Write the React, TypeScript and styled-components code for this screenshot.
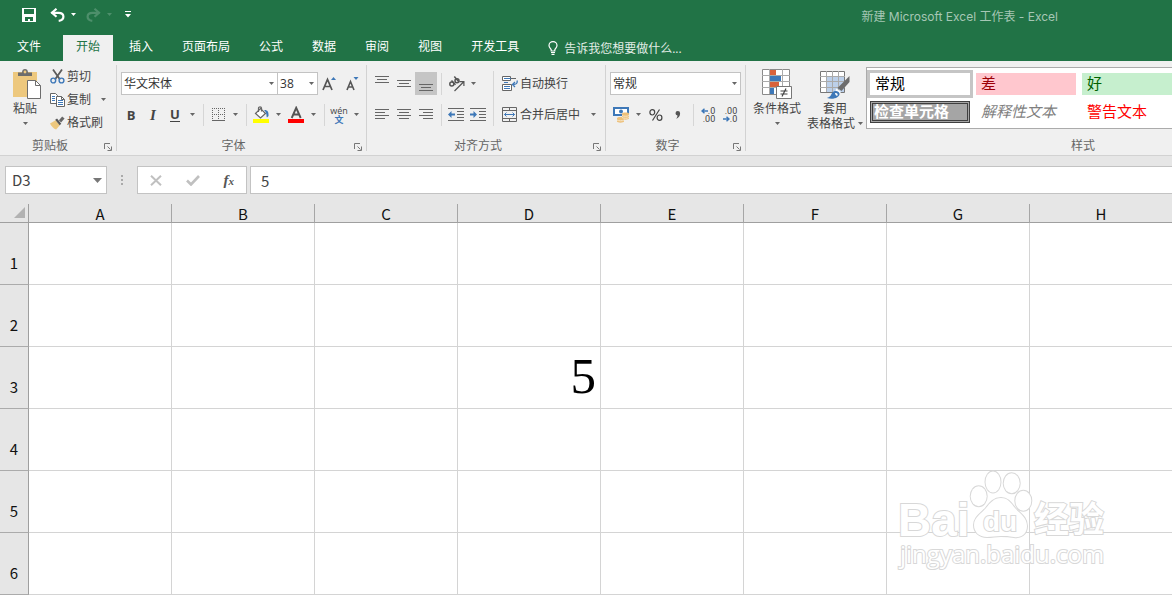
import React from 'react';
import styled, { createGlobalStyle, css } from 'styled-components';

const GlobalStyle = createGlobalStyle`
  *, *::before, *::after { box-sizing: border-box; }
  html, body { margin: 0; padding: 0; }
  body {
    background: #fff;
    color: #444;
    font-family: "Open Sans", "Noto Sans CJK SC", sans-serif;
    font-size: 12px;
    line-height: 16px;
    overflow: hidden;
  }
  button, input, select { font: inherit; color: inherit; margin: 0; }
  button { background: none; border: 0; padding: 0; cursor: pointer; }
  svg { display: block; flex: none; }
`;

const App = styled.div`
  display: flex;
  flex-direction: column;
  min-height: 100vh;
`;

/* ---------- Title bar and tabs ---------- */

const TitleBar = styled.header`
  display: flex;
  align-items: center;
  justify-content: space-between;
  height: 35px;
  padding: 0 114px 6px 22px;
  background: #217346;
  color: #a6c7b5;
`;

const QuickAccess = styled.div`
  display: flex;
  align-items: center;
  color: #fff;
`;

const QuickButton = styled.button<{ $gap?: number }>`
  display: flex;
  align-items: center;
  gap: 6px;
  margin-right: ${(p) => p.$gap ?? 0}px;
  &:disabled { color: #4d8f6b; }
`;

const Title = styled.h1`
  margin: 0;
  padding-top: 4px;
  font-family: Inter, "Noto Sans CJK SC", sans-serif;
  font-size: 12px;
  font-weight: 400;
`;

const TabBar = styled.nav`
  display: flex;
  gap: 3px;
  height: 26px;
  background: #217346;
  color: #fff;
`;

const Tab = styled.button<{ $active?: boolean; $file?: boolean }>`
  flex: none;
  padding: ${(p) => (p.$file ? '0 19px 2px 17px' : '0 13px 2px')};
  ${(p) =>
    p.$active &&
    css`
      background: #f0f0f0;
      color: #217346;
    `}
`;

const TellMe = styled.label`
  display: flex;
  align-items: center;
  gap: 6px;
  flex: 1;
  margin-left: 13px;
`;

const TellMeInput = styled.input`
  flex: 1;
  min-width: 0;
  height: 18px;
  padding: 0;
  border: 0;
  background: none;
  outline: 0;
  &::placeholder { color: #e1ede6; opacity: 1; }
`;

/* ---------- Ribbon ---------- */

const Ribbon = styled.section`
  display: flex;
  height: 95px;
  padding: 4px 0;
  background: #f0f0f0;
  border-bottom: 1px solid #d2d2d2;
`;

const Group = styled.div<{ $grow?: boolean }>`
  display: flex;
  flex-direction: column;
  flex: ${(p) => (p.$grow ? '1 1 0' : 'none')};
  min-width: 0;
  border-right: ${(p) => (p.$grow ? '0' : '1px solid #d2d2d2')};
`;

const GroupBody = styled.div<{ $left?: number; $right?: number }>`
  display: flex;
  flex: 1;
  min-height: 0;
  padding: 0 ${(p) => p.$right ?? 4}px 0 ${(p) => p.$left ?? 4}px;
`;

const GroupFooter = styled.div<{ $end?: boolean }>`
  display: flex;
  justify-content: ${(p) => (p.$end ? 'flex-end' : 'normal')};
  height: 14px;
  padding-right: ${(p) => (p.$end ? '77px' : '4px')};
  color: #666;
  line-height: 18px;
`;

const GroupName = styled.span`
  flex: 1;
  padding-right: 4px;
  text-align: center;
`;

const LauncherButton = styled.button`
  align-self: flex-end;
`;

const Rows = styled.div`
  display: flex;
  flex-direction: column;
  gap: 8px;
  padding-top: 7px;
`;

const Row = styled.div<{ $inset?: number }>`
  display: flex;
  align-items: center;
  height: 23px;
  padding-left: ${(p) => p.$inset ?? 0}px;
`;

const Tool = styled.button<{ $pressed?: boolean }>`
  display: flex;
  align-items: center;
  justify-content: center;
  width: 22px;
  height: 23px;
  background: ${(p) => (p.$pressed ? '#c5c5c5' : 'none')};
`;

const Letter = styled.span<{ $kind: 'bold' | 'italic' | 'underline' }>`
  font-weight: 700;
  font-size: 13px;
  line-height: 14px;
  ${(p) => p.$kind === 'italic' && 'font-family: "Liberation Serif", serif; font-style: italic; font-size: 15px;'}
  ${(p) => p.$kind === 'underline' && 'line-height: 13px; border-bottom: 1px solid #444;'}
`;

const CaretButton = styled.button<{ $gap?: number }>`
  display: flex;
  align-items: center;
  justify-content: center;
  width: 13px;
  height: 23px;
  margin-left: ${(p) => p.$gap ?? 0}px;
`;

const Divider = styled.span<{ $tall?: boolean }>`
  flex: none;
  width: 1px;
  height: ${(p) => (p.$tall ? 55 : 22)}px;
  margin: ${(p) => (p.$tall ? '6px 4px 0 4px' : '0 3px 0 4px')};
  background: #d6d6d6;
`;

const TextTool = styled.button`
  display: flex;
  align-items: center;
  gap: 2px;
  height: 23px;
  padding-left: 4px;
  white-space: nowrap;
`;

const ClipList = styled.div`
  display: flex;
  flex-direction: column;
  padding-left: 5px;
`;

const ClipRow = styled.div`
  display: flex;
  align-items: center;
  height: 23px;
`;

const BigButton = styled.button<{ $width: number }>`
  display: flex;
  flex-direction: column;
  align-items: center;
  flex: none;
  width: ${(p) => p.$width}px;
  padding-top: 4px;
  line-height: 15px;
  white-space: nowrap;
`;

const BigLabel = styled.span`
  display: flex;
  align-items: center;
  gap: 3px;
  min-height: 15px;
  &:first-of-type { margin-top: 2px; }
`;

const SelectBox = styled.span<{ $width: number }>`
  position: relative;
  display: block;
  width: ${(p) => p.$width}px;
  height: 23px;
  & + & { margin-left: -1px; }
  svg { position: absolute; right: 4px; top: 10px; pointer-events: none; }
`;

const Select = styled.select`
  appearance: none;
  width: 100%;
  height: 100%;
  padding: 0 16px 0 2px;
  border: 1px solid #c3c3c3;
  border-radius: 0;
  background: #fff;
  color: #333;
  outline: 0;
`;

const Gallery = styled.div`
  display: grid;
  grid-template-columns: repeat(3, 100px);
  grid-auto-rows: 22px;
  gap: 6px;
  flex: 1;
  min-width: 0;
  height: 62px;
  margin-top: 2px;
  padding: 5px 3px;
  border: 1px solid #ababab;
  border-right: 0;
  background: #fff;
  overflow: hidden;
`;

type StyleKind = 'normal' | 'bad' | 'good' | 'check' | 'note' | 'warn';

const styleLooks = {
  normal: css`background: #fff; color: #000; box-shadow: 0 0 0 3px #c5c5c5;`,
  bad: css`background: #ffc7ce; color: #9c0006;`,
  good: css`background: #c6efce; color: #006100;`,
  check: css`background: #a5a5a5; color: #fff; font-weight: 700; border: 3px double #3f3f3f; padding-left: 1px;`,
  note: css`color: #7f7f7f; font-style: italic;`,
  warn: css`color: #ff0000;`,
};

const StyleCell = styled.button<{ $kind: StyleKind }>`
  display: flex;
  align-items: center;
  padding: 0 0 2px 5px;
  font-size: 15px;
  line-height: 16px;
  white-space: nowrap;
  ${(p) => styleLooks[p.$kind]}
`;

/* ---------- Formula bar ---------- */

const FormulaBar = styled.div`
  display: flex;
  align-items: center;
  height: 48px;
  padding-left: 5px;
  background: #e6e6e6;
`;

const NameBox = styled.div`
  display: flex;
  align-items: center;
  width: 102px;
  height: 28px;
  padding-right: 4px;
  border: 1px solid #c3c3c3;
  background: #fff;
`;

const NameInput = styled.input`
  flex: 1;
  min-width: 0;
  padding: 0 0 0 6px;
  border: 0;
  background: none;
  outline: 0;
  font-family: "Noto Sans CJK SC", sans-serif;
  font-size: 15px;
`;

const Grip = styled.span`
  width: 30px;
  display: flex;
  justify-content: center;
`;

const FormulaActions = styled.div`
  display: flex;
  align-items: center;
  justify-content: space-around;
  width: 110px;
  height: 28px;
  margin-right: 3px;
  border: 1px solid #c3c3c3;
  background: #fff;
`;

const FormulaInput = styled.input`
  flex: 1;
  min-width: 0;
  height: 28px;
  padding: 0 10px;
  border: 1px solid #c3c3c3;
  border-right: 0;
  background: #fff;
  outline: 0;
  font-family: "Noto Sans CJK SC", sans-serif;
  font-size: 15px;
`;

const Fx = styled.span`
  font-family: "Liberation Serif", serif;
  font-size: 15px;
  font-style: italic;
  font-weight: 700;
  color: #555;
  small { font-size: 11px; }
`;

/* ---------- Sheet ---------- */

const Sheet = styled.main`
  position: relative;
  flex: 1;
`;

const Grid = styled.table`
  width: 100%;
  table-layout: fixed;
  border-collapse: separate;
  border-spacing: 0;
`;

const CornerCell = styled.th`
  width: 29px;
  height: 19px;
  padding: 0 3px 2px 0;
  background: #e6e6e6;
  border-right: 1px solid #9f9f9f;
  border-bottom: 1px solid #9f9f9f;
  svg { margin-left: auto; }
`;

const ColumnHead = styled.th`
  width: 143px;
  height: 19px;
  padding: 2px 0 0;
  background: #e6e6e6;
  border-right: 1px solid #a6a6a6;
  border-bottom: 1px solid #9f9f9f;
  color: #111;
  font: 400 15px/16px "Noto Sans CJK SC", sans-serif;
  &:last-child { width: auto; border-right: 0; }
`;

const RowHead = styled.th`
  height: 62px;
  padding: 18px 0 0;
  background: #e6e6e6;
  border-right: 1px solid #9f9f9f;
  border-bottom: 1px solid #ababab;
  color: #111;
  font: 400 15px/16px "Noto Sans CJK SC", sans-serif;
`;

const Cell = styled.td`
  height: 62px;
  padding: 0 4px 4px 0;
  border-right: 1px solid #d4d4d4;
  border-bottom: 1px solid #d4d4d4;
  color: #000;
  font: 51px/52px "Liberation Serif", serif;
  text-align: right;
  &:last-child { border-right: 0; }
`;

const Watermark = styled.svg`
  position: absolute;
  top: 264px;
  right: 58px;
  pointer-events: none;
`;

/* ---------- Icons ---------- */

const Caret = ({ color = '#666', w = 5 }: { color?: string; w?: number }) => (
  <svg width={w} height={w === 5 ? 3 : 5} viewBox="0 0 5 3" preserveAspectRatio="none">
    <path d="M0 0h5L2.500 3z" fill={color} />
  </svg>
);

const SaveIcon = () => (
  <svg width="14" height="14" viewBox="0 0 14 14" fill="#fff">
    <path fillRule="evenodd" d="M0 0h14v14H0zM2 1v5h10V1zM3 9v4h3v-2h2v2h3V9z" />
  </svg>
);

const UndoIcon = ({ flip = false }: { flip?: boolean }) => (
  <svg width="15" height="14" viewBox="0 0 15 14">
    <g transform={flip ? 'matrix(-1 0 0 1 15 0)' : undefined} fill="none" stroke="currentColor" strokeWidth="2.200">
      <path d="M1.500 4.800h7c3.200 0 4.900 1.600 4.900 3.900 0 2.400-1.800 3.700-4.700 4.100" />
      <path d="M6.500.8 2 4.800l4.500 4" />
    </g>
  </svg>
);

const CustomizeIcon = () => (
  <svg width="6" height="7" viewBox="0 0 6 7" fill="#fff">
    <path d="M0 0h6v1H0zM0 3h6L3 6.500z" />
  </svg>
);

const BulbIcon = () => (
  <svg width="10" height="14" viewBox="0 0 10 14" fill="none" stroke="#fff" strokeWidth="1.200">
    <path d="M3.200 10V8.800C2.600 7.400 1 6.600 1 4.500 1 2.300 2.800.7 5 .7s4 1.600 4 3.800c0 2.100-1.600 2.900-2.200 4.300V10zM3 11.500h4M3.500 13.300h3" />
  </svg>
);

const LauncherIcon = () => (
  <svg width="8" height="8" viewBox="0 0 8 8" fill="none" stroke="#777">
    <path d="M.5 6V.5H6M3.500 3.500l3 3M7.500 3.500v4h-4" />
  </svg>
);

const PasteIcon = () => (
  <svg width="32" height="30" viewBox="-4 0 32 30">
    <path d="M0 3h24v25H0z" fill="#edc87e" />
    <path d="M5 7V3.500h4C9 1 10.300 0 12 0s3 1 3 3.500h4V7z" fill="#6d6d6d" />
    <circle cx="12" cy="3" r="1.400" fill="#edc87e" />
    <path d="M14.500 11.500h8l5 5v13h-13z" fill="#fff" stroke="#6d6d6d" />
    <path d="M22.500 11.500v5h5" fill="none" stroke="#6d6d6d" />
  </svg>
);

const CutIcon = () => (
  <svg width="15" height="15" viewBox="0 0 15 15" fill="none">
    <path d="M3 .5 10 10.500M12 .5 5 10.500" stroke="#5c5c5c" strokeWidth="1.800" />
    <circle cx="3.300" cy="11.500" r="2.400" stroke="#3e78b8" strokeWidth="1.400" />
    <circle cx="11.500" cy="11.500" r="2.400" stroke="#3e78b8" strokeWidth="1.400" />
  </svg>
);

const CopyIcon = () => (
  <svg width="15" height="14" viewBox="0 0 15 14">
    <path d="M.5.5h5l2 2v8h-7z" fill="#fff" stroke="#666" />
    <path d="M2 3.500h3M2 5.500h3M2 7.500h3" stroke="#3e78b8" />
    <path d="M6.500 3.500h5l3 3v7h-8z" fill="#fff" stroke="#666" />
    <path d="M11.500 3.500v3h3" fill="none" stroke="#666" />
    <path d="M8 7.500h5M8 9.500h5M8 11.500h5" stroke="#3e78b8" />
  </svg>
);

const PainterIcon = () => (
  <svg width="15" height="14" viewBox="0 0 16 14">
    <path d="M0 7.500 6 4l4.500 5.500L6.500 14C4 13 1.500 10.500 0 7.500z" fill="#edc87e" />
    <path d="m5.500 3.500 2-1.200 4.500 5.500-1.700 1.600z" fill="#555" />
    <path d="M9.500 4 13 0l2.500 2.200-3.700 4.300z" fill="#666" />
  </svg>
);

const GrowIcon = ({ shrink = false }: { shrink?: boolean }) => (
  <svg width="15" height="16" viewBox="0 0 15 16">
    {shrink ? (
      <>
        <path d="M3 14 6.500 5.500 10 14M4.200 11h4.600" fill="none" stroke="#555" strokeWidth="1.600" />
        <path d="M9.500 1h5L12 4z" fill="#3e78b8" />
      </>
    ) : (
      <>
        <path d="M1 14 5.500 3.500 10 14M2.800 10.500h5.400" fill="none" stroke="#555" strokeWidth="1.700" />
        <path d="M9 4h5l-2.500-3z" fill="#3e78b8" />
      </>
    )}
  </svg>
);

const BordersIcon = () => (
  <svg width="13" height="13" viewBox="0 0 13 13" stroke="#666" shapeRendering="crispEdges">
    <path d="M0 .5h13M0 6.500h13M.5 0v12M6.500 0v12M12.500 0v12" strokeDasharray="1 1" />
    <path d="M0 12.500h13" />
  </svg>
);

const FillIcon = () => (
  <svg width="16" height="17" viewBox="0 0 16 17">
    <path d="m2.500 7.500 5-5 5 5-5 4.500z" fill="#fff" stroke="#666" strokeWidth="1.200" />
    <path d="M5.500 6V2C5.500.6 8.500.6 8.500 2v3.500" fill="none" stroke="#666" strokeWidth="1.200" />
    <path d="M11 4c3-.5 5 1.500 4.500 6l-1.500 1.500c-1-1.500.5-4-3-7.500z" fill="#3e78b8" />
    <path d="M0 13h16v4H0z" fill="#ff0" />
  </svg>
);

const FontColorIcon = () => (
  <svg width="16" height="17" viewBox="0 0 16 17">
    <path d="M3.700 12 8.200 1.800 12.700 12M5.500 8.500h5.400" fill="none" stroke="#555" strokeWidth="1.900" />
    <path d="M0 13h16v4H0z" fill="#f00" />
  </svg>
);

const Phonetic = styled.span`
  display: flex;
  flex-direction: column;
  align-items: center;
  font-size: 9px;
  line-height: 9px;
  b { color: #3e78b8; font-weight: 700; }
`;

const LinesIcon = ({ lines, y = 0 }: { lines: [number, number][]; y?: number }) => (
  <svg width="14" height="17" viewBox="0 0 14 17" stroke="#666">
    {lines.map(([x, w], i) => (
      <path key={i} d={`M${x} ${y + i * 3 + 0.5}h${w}`} />
    ))}
  </svg>
);

const OrientIcon = () => (
  <svg width="17" height="16" viewBox="0 0 17 16" fill="none" stroke="#555" strokeWidth="1.500">
    <circle cx="3.800" cy="8" r="2" />
    <path d="m3.500 4.500 4 4.200M6.300.5l4.300 5" />
    <circle cx="9" cy="4.800" r="2" />
    <path d="m6.500 15 9-9M11.500 5.600h4.400V10" strokeWidth="1.200" />
  </svg>
);

const IndentIcon = ({ right = false }: { right?: boolean }) => (
  <svg width="16" height="13" viewBox="0 0 16 13">
    <path d="M0 .5h16M9 3.500h7M9 6.500h7M9 9.500h7M0 12.500h16" stroke="#666" />
    <path d={right ? 'M0 5.500h3.500V3L7 6.500 3.500 10V7.500H0z' : 'M7 5.500H3.500V3L0 6.500 3.500 10V7.500H7z'} fill="#3e78b8" />
  </svg>
);

const WrapIcon = () => (
  <svg width="16" height="15" viewBox="0 0 16 15" fill="none">
    <path d="M.5.500h8v4h-8zM.5 8.500h9v6h-9z" stroke="#666" fill="#fff" />
    <path d="M9 2.500h5" stroke="#666" />
    <path d="M2 2.500h7M2 6.500h4M2 10.500h6M2 12.500h6" stroke="#3e78b8" />
    <path d="M15 4.500c.8 3-1 4-4 4M13 6l-2.500 2.500L13 11" stroke="#3e78b8" strokeWidth="1.300" />
  </svg>
);

const MergeIcon = () => (
  <svg width="16" height="15" viewBox="0 0 16 15" fill="none">
    <path d="M.5.500h14v14H.5zM.5 3.500h14M.5 11.500h14M7.500.5v3M7.500 11.500v3" stroke="#666" />
    <path d="M2.500 7.500h10M4.500 5.500l-2 2 2 2M10.500 5.500l2 2-2 2" stroke="#3e78b8" />
  </svg>
);

const CurrencyIcon = () => (
  <svg width="17" height="17" viewBox="0 0 17 17">
    <path d="M0 1h16v9H0z" fill="#3e78b8" />
    <path d="M2 3h12v5H2z" fill="#fff" />
    <circle cx="8" cy="5.500" r="2" fill="#3e78b8" />
    <path
      d="M9 7.500C9 6 16 6 16 7.500v5C16 14 9 14 9 12.500zM4 12c0-1.500 7-1.500 7 0v3.500c0 1.500-7 1.500-7 0z"
      fill="#edc07a"
    />
    <path d="M9 9.500c1 1 6 1 7 0M9 11.500c1 1 6 1 7 0M4 14c1 1 6 1 7 0" stroke="#f7e6c8" fill="none" />
  </svg>
);

const CommaIcon = () => (
  <svg width="6" height="8" viewBox="0 0 6 8">
    <path d="M.500 2.300a2.300 2.300 0 1 1 4.600 0C5.200 5 3.500 7.200 1 7.800c1-1 1.500-2 1.500-3.200A2.300 2.300 0 0 1 .5 2.300z" fill="#555" />
  </svg>
);

const PercentIcon = () => (
  <svg width="14" height="12" viewBox="0 0 14 12" fill="none" stroke="#444" strokeWidth="1.200">
    <ellipse cx="3.300" cy="3.300" rx="2.400" ry="2.700" />
    <ellipse cx="10.500" cy="8.700" rx="2.400" ry="2.700" />
    <path d="M10.500.500 3.500 11.500" />
  </svg>
);

const Decimals = styled.span`
  display: grid;
  grid-template-columns: 7px auto;
  align-items: center;
  justify-items: end;
  font: 9px/8px Roboto, sans-serif;
`;

const FullLine = styled.span`
  grid-column: 1 / -1;
`;

const ArrowIcon = ({ right = false }: { right?: boolean }) => (
  <svg width="7" height="6" viewBox="0 0 7 6" fill="none" stroke="#3e78b8" strokeWidth="1.500">
    <path d={right ? 'M0 3h5.500M3.500.800 6 3 3.500 5.200' : 'M7 3H1.500M3.500.800 1 3l2.500 2.200'} />
  </svg>
);

const ConditionalIcon = () => (
  <svg width="30" height="30" viewBox="0 0 30 30">
    <path d="M.5.500h27v25H.5z" fill="#fff" stroke="#8a8a8a" />
    <path d="M0 6.500h28M0 12.500h28M0 18.500h28M7.500 0v25M20.500 0v25" stroke="#aaa" />
    <path d="M8 1h6v5H8zM8 13h9v5H8z" fill="#d9623b" />
    <path d="M8 7h11v5H8zM8 19h4v6H8z" fill="#3e78b8" />
    <path d="M14.500 17.500h15v12h-15z" fill="#fff" stroke="#777" />
    <path d="M18.500 22h7M18.500 25h7M24 19.500l-4 8" stroke="#444" strokeWidth="1.200" fill="none" />
  </svg>
);

const TableFormatIcon = () => (
  <svg width="30" height="30" viewBox="0 0 30 30">
    <path d="M.5 2.500h24v21H.5z" fill="#fff" stroke="#777" />
    <path d="M7 8h17v15H7z" fill="#bcd0ea" />
    <path d="M0 7.500h25M0 12.500h25M0 18.500h25M6.500 2v21M12.500 2v21M18.500 2v21" stroke="#aaa" />
    <path d="M29.500 7v6l-8 9-4-3z" fill="#6d6d6d" />
    <path d="m16.500 19.500 4.500 3.500-1.500 1.700-4-3.200z" fill="#fff" />
    <path d="M7 29c3-1 3.500-2 5-5 2-3 7-2.500 7.500.500C20 28 14 31 7 29z" fill="#3e78b8" />
    <path d="M15 24c2-.500 3 1 2.500 2.500-1 .500-2 0-2.500-2.500z" fill="#fff" />
  </svg>
);

const Launcher = ({ label }: { label: string }) => (
  <LauncherButton aria-label={label}>
    <LauncherIcon />
  </LauncherButton>
);

/* ---------- Data ---------- */

const tabs = ['插入', '页面布局', '公式', '数据', '审阅', '视图', '开发工具'];

const cellStyles: { name: string; kind: StyleKind }[] = [
  { name: '常规', kind: 'normal' },
  { name: '差', kind: 'bad' },
  { name: '好', kind: 'good' },
  { name: '检查单元格', kind: 'check' },
  { name: '解释性文本', kind: 'note' },
  { name: '警告文本', kind: 'warn' },
];

const columns = ['A', 'B', 'C', 'D', 'E', 'F', 'G', 'H'];
const rows = [1, 2, 3, 4, 5, 6];
const values: Record<string, string> = { D3: '5' };

const Combo = ({ label, value, width }: { label: string; value: string; width: number }) => (
  <SelectBox $width={width}>
    <Select aria-label={label} defaultValue={value}>
      <option>{value}</option>
    </Select>
    <Caret />
  </SelectBox>
);

const More = ({ label, gap }: { label: string; gap?: number }) => (
  <CaretButton aria-label={label} $gap={gap}>
    <Caret />
  </CaretButton>
);

export default function ExcelWindow() {
  return (
    <App>
      <GlobalStyle />
      <TitleBar>
        <QuickAccess>
          <QuickButton aria-label="保存" $gap={14}>
            <SaveIcon />
          </QuickButton>
          <QuickButton aria-label="撤消" $gap={10}>
            <UndoIcon />
            <Caret color="#fff" />
          </QuickButton>
          <QuickButton aria-label="恢复" disabled $gap={13}>
            <UndoIcon flip />
            <Caret color="#4d8f6b" />
          </QuickButton>
          <QuickButton aria-label="自定义快速访问工具栏">
            <CustomizeIcon />
          </QuickButton>
        </QuickAccess>
        <Title>新建 Microsoft Excel 工作表 - Excel</Title>
      </TitleBar>

      <TabBar>
        <Tab $file>文件</Tab>
        <Tab $active>开始</Tab>
        {tabs.map((t) => (
          <Tab key={t}>{t}</Tab>
        ))}
        <TellMe>
          <BulbIcon />
          <TellMeInput aria-label="告诉我" placeholder="告诉我您想要做什么..." />
        </TellMe>
      </TabBar>

      <Ribbon>
        <Group>
          <GroupBody $left={9} $right={6}>
            <BigButton $width={32}>
              <PasteIcon />
              <BigLabel>粘贴</BigLabel>
              <BigLabel>
                <Caret />
              </BigLabel>
            </BigButton>
            <ClipList>
              <ClipRow>
                <TextTool>
                  <CutIcon />
                  剪切
                </TextTool>
              </ClipRow>
              <ClipRow>
                <TextTool>
                  <CopyIcon />
                  复制
                </TextTool>
                <More label="复制选项" gap={6} />
              </ClipRow>
              <ClipRow>
                <TextTool>
                  <PainterIcon />
                  格式刷
                </TextTool>
              </ClipRow>
            </ClipList>
          </GroupBody>
          <GroupFooter>
            <GroupName>剪贴板</GroupName>
            <Launcher label="剪贴板设置" />
          </GroupFooter>
        </Group>

        <Group>
          <GroupBody $left={3} $right={3}>
            <Rows>
              <Row $inset={1}>
                <Combo label="字体" value="华文宋体" width={157} />
                <Combo label="字号" value="38" width={41} />
                <Tool aria-label="增大字号">
                  <GrowIcon />
                </Tool>
                <Tool aria-label="减小字号">
                  <GrowIcon shrink />
                </Tool>
              </Row>
              <Row>
                <Tool aria-label="加粗">
                  <Letter $kind="bold">B</Letter>
                </Tool>
                <Tool aria-label="倾斜">
                  <Letter $kind="italic">I</Letter>
                </Tool>
                <Tool aria-label="下划线">
                  <Letter $kind="underline">U</Letter>
                </Tool>
                <More label="下划线选项" />
                <Divider />
                <Tool aria-label="边框">
                  <BordersIcon />
                </Tool>
                <More label="边框选项" />
                <Divider />
                <Tool aria-label="填充颜色">
                  <FillIcon />
                </Tool>
                <More label="填充颜色选项" />
                <Tool aria-label="字体颜色">
                  <FontColorIcon />
                </Tool>
                <More label="字体颜色选项" />
                <Divider />
                <Tool aria-label="拼音">
                  <Phonetic>
                    wén<b>文</b>
                  </Phonetic>
                </Tool>
                <More label="拼音选项" />
              </Row>
            </Rows>
          </GroupBody>
          <GroupFooter>
            <GroupName>字体</GroupName>
            <Launcher label="字体设置" />
          </GroupFooter>
        </Group>

        <Group>
          <GroupBody $right={5}>
            <Rows>
              <Row>
                <Tool aria-label="顶端对齐">
                  <LinesIcon y={1} lines={[[0, 14], [2, 10], [0, 14]]} />
                </Tool>
                <Tool aria-label="垂直居中">
                  <LinesIcon y={5} lines={[[0, 14], [2, 10], [0, 14]]} />
                </Tool>
                <Tool aria-label="底端对齐" $pressed>
                  <LinesIcon y={9} lines={[[0, 14], [2, 10], [0, 14]]} />
                </Tool>
                <Divider />
                <Tool aria-label="方向">
                  <OrientIcon />
                </Tool>
                <More label="方向选项" />
              </Row>
              <Row>
                <Tool aria-label="左对齐">
                  <LinesIcon y={3} lines={[[0, 14], [0, 10], [0, 14], [0, 10]]} />
                </Tool>
                <Tool aria-label="居中">
                  <LinesIcon y={3} lines={[[0, 14], [2, 10], [0, 14], [2, 10]]} />
                </Tool>
                <Tool aria-label="右对齐">
                  <LinesIcon y={3} lines={[[0, 14], [4, 10], [0, 14], [4, 10]]} />
                </Tool>
                <Divider />
                <Tool aria-label="减少缩进量">
                  <IndentIcon />
                </Tool>
                <Tool aria-label="增加缩进量">
                  <IndentIcon right />
                </Tool>
              </Row>
            </Rows>
            <Divider $tall />
            <Rows>
              <Row>
                <TextTool>
                  <WrapIcon />
                  自动换行
                </TextTool>
              </Row>
              <Row>
                <TextTool>
                  <MergeIcon />
                  合并后居中
                </TextTool>
                <More label="合并选项" gap={7} />
              </Row>
            </Rows>
          </GroupBody>
          <GroupFooter>
            <GroupName>对齐方式</GroupName>
            <Launcher label="对齐设置" />
          </GroupFooter>
        </Group>

        <Group>
          <GroupBody>
            <Rows>
              <Row>
                <Combo label="数字格式" value="常规" width={131} />
              </Row>
              <Row>
                <Tool aria-label="会计数字格式">
                  <CurrencyIcon />
                </Tool>
                <More label="货币选项" />
                <Tool aria-label="百分比样式">
                  <PercentIcon />
                </Tool>
                <Tool aria-label="千位分隔样式">
                  <CommaIcon />
                </Tool>
                <Divider />
                <Tool aria-label="增加小数位数">
                  <Decimals>
                    <ArrowIcon />
                    <span>.0</span>
                    <FullLine>.00</FullLine>
                  </Decimals>
                </Tool>
                <Tool aria-label="减少小数位数">
                  <Decimals>
                    <FullLine>.00</FullLine>
                    <ArrowIcon right />
                    <span>.0</span>
                  </Decimals>
                </Tool>
              </Row>
            </Rows>
          </GroupBody>
          <GroupFooter>
            <GroupName>数字</GroupName>
            <Launcher label="数字设置" />
          </GroupFooter>
        </Group>

        <Group $grow>
          <GroupBody $right={0}>
            <BigButton $width={54}>
              <ConditionalIcon />
              <BigLabel>条件格式</BigLabel>
              <BigLabel>
                <Caret />
              </BigLabel>
            </BigButton>
            <BigButton $width={62}>
              <TableFormatIcon />
              <BigLabel>套用</BigLabel>
              <BigLabel>
                表格格式
                <Caret />
              </BigLabel>
            </BigButton>
            <Gallery>
              {cellStyles.map((s) => (
                <StyleCell key={s.name} $kind={s.kind}>
                  {s.name}
                </StyleCell>
              ))}
            </Gallery>
          </GroupBody>
          <GroupFooter $end>样式</GroupFooter>
        </Group>
      </Ribbon>

      <FormulaBar>
        <NameBox>
          <NameInput aria-label="名称框" defaultValue="D3" />
          <button aria-label="名称列表">
            <Caret w={9} color="#777" />
          </button>
        </NameBox>
        <Grip>
          <svg width="2" height="10" viewBox="0 0 2 10" fill="#aaa">
            <path d="M0 0h2v2H0zM0 4h2v2H0zM0 8h2v2H0z" />
          </svg>
        </Grip>
        <FormulaActions>
          <button aria-label="取消">
            <svg width="12" height="11" viewBox="0 0 12 11" stroke="#c0c0c0" strokeWidth="2">
              <path d="m1 .800 10 9.400M11 .800 1 10.200" />
            </svg>
          </button>
          <button aria-label="输入">
            <svg width="14" height="11" viewBox="0 0 14 11" fill="none" stroke="#c0c0c0" strokeWidth="2.600">
              <path d="m1 5.500 4 4L13 1" />
            </svg>
          </button>
          <button aria-label="插入函数">
            <Fx>
              f<small>x</small>
            </Fx>
          </button>
        </FormulaActions>
        <FormulaInput aria-label="编辑栏" defaultValue="5" />
      </FormulaBar>

      <Sheet>
        <Grid>
          <thead>
            <tr>
              <CornerCell aria-label="全选">
                <svg width="11" height="11" viewBox="0 0 11 11">
                  <path d="M11 0v11H0z" fill="#b2b2b2" />
                </svg>
              </CornerCell>
              {columns.map((c) => (
                <ColumnHead key={c} scope="col">
                  {c}
                </ColumnHead>
              ))}
            </tr>
          </thead>
          <tbody>
            {rows.map((r) => (
              <tr key={r}>
                <RowHead scope="row">{r}</RowHead>
                {columns.map((c) => (
                  <Cell key={c}>{values[`${c}${r}`]}</Cell>
                ))}
              </tr>
            ))}
          </tbody>
        </Grid>
        <Watermark width="220" height="110" viewBox="894 468 220 110" fill="#fff" stroke="#d8d8d8" strokeWidth="2" paintOrder="stroke">
          <text x="898" y="536" fontFamily="Liberation Sans, sans-serif" fontWeight="700" fontSize="46">
            Bai
          </text>
          <ellipse cx="978.700" cy="496.300" rx="8" ry="10" />
          <ellipse cx="993" cy="482" rx="7.500" ry="10.500" />
          <ellipse cx="1011.700" cy="483.300" rx="8" ry="10" />
          <ellipse cx="1023.300" cy="500.700" rx="8" ry="10" />
          <path d="M1001 498c7 0 10 5 14 10s12 9 12 18-7 12-13 11-8-1-13-1-9 1-14 1c-8 0-13-5-13-12 0-8 8-12 12-17s8-10 15-10z" />
          <text x="983" y="531" fontFamily="Liberation Sans, sans-serif" fontSize="28" fontWeight="700">
            du
          </text>
          <text x="1034" y="532" fontFamily="Noto Sans CJK SC, sans-serif" fontSize="35" fontWeight="700">
            经验
          </text>
          <text x="900" y="563" fontFamily="Open Sans, sans-serif" fontSize="24" fontWeight="500">
            jingyan.baidu.com
          </text>
        </Watermark>
      </Sheet>
    </App>
  );
}
